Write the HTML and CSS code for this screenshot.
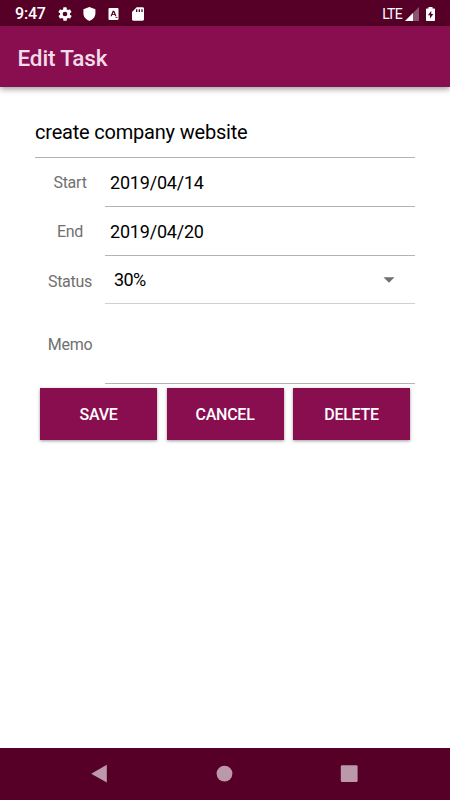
FILE: index.html
```
<!DOCTYPE html>
<html lang="en">
<head>
  <meta charset="UTF-8">
  <meta name="viewport" content="width=device-width, initial-scale=1.0">
  <title>Edit Task</title>
  <link rel="stylesheet" href="styles.css">
</head>
<body>
  <div class="status-bar">
    <span class="time">9:47</span>
    <div class="notifications">
      <svg width="16" height="16" viewBox="0 0 24 24"><path fill-rule="evenodd" d="M19.4 13a7.5 7.5 0 0 0 0-2l2.1-1.600a.5.5 0 0 0 .1-.6l-2-3.500a.5.5 0 0 0-.6-.2l-2.500 1a7.300 7.300 0 0 0-1.700-1l-.4-2.600A.5.5 0 0 0 14 2h-4a.5.5 0 0 0-.5.4l-.4 2.700a7.700 7.700 0 0 0-1.700 1l-2.500-1a.5.5 0 0 0-.6.2l-2 3.500a.5.5 0 0 0 .1.6L4.600 11a7.900 7.900 0 0 0 0 2l-2.100 1.600a.5.5 0 0 0-.1.6l2 3.500c.1.2.4.3.6.2l2.500-1a7.300 7.300 0 0 0 1.700 1l.4 2.700c0 .2.2.4.5.4h4c.2 0 .5-.2.5-.4l.4-2.700a7.700 7.700 0 0 0 1.700-1l2.500 1c.2.1.5 0 .6-.2l2-3.500a.5.5 0 0 0-.1-.6zM12 15.500a3.500 3.500 0 1 1 0-7 3.500 3.500 0 0 1 0 7z"/></svg>
      <svg width="16" height="16" viewBox="0 0 24 24"><path d="M12.600 1.500 3.600 5v6c0 5.500 3.800 9.500 9 11.500 5.200-2 9-6 9-11.500V5z"/></svg>
      <svg width="16" height="16" viewBox="0 0 16 16"><path fill-rule="evenodd" d="M3.500 2h8a1 1 0 0 1 1 1v10a1 1 0 0 1-1 1h-8a1 1 0 0 1-1-1V3a1 1 0 0 1 1-1zM6.700 4.700 4.500 10.300h1.300l.4-1.200h2.600l.4 1.200h1.300L8.300 4.700zM7.500 6l.8 2.200H6.700zM9.500 11h2v.8h-2z"/></svg>
      <svg width="16" height="16" viewBox="0 0 24 24"><path fill-rule="evenodd" d="M19 2H10L3 9v11c0 1.100.9 2 2 2h14c1.100 0 2-.9 2-2V4c0-1.100-.9-2-2-2zM9 5h2v4H9zm4 0h2v4h-2zm4 0h2v4h-2z"/></svg>
    </div>
    <span class="network">LTE</span>
    <svg class="signal" width="14" height="14" viewBox="0 0 14 14"><path class="dim" d="M0 14 14 0v14z"/><path d="M0 14 8 6v8z"/></svg>
    <svg width="9" height="14" viewBox="0 0 8 14" preserveAspectRatio="none"><path fill-rule="evenodd" d="M2.200 0h3.600v1.400H7.300a.7.7 0 0 1 .7.7v11.200a.7.7 0 0 1-.7.7H.7a.7.7 0 0 1-.7-.7V2.100a.7.7 0 0 1 .7-.7h1.500zM4.700 3.800 1.700 8.300h1.900v3.200l2.900-4.600H4.700z"/></svg>
  </div>
  <header class="app-bar">
    <h1>Edit Task</h1>
  </header>
  <main class="task-form">
    <div class="field title-field">create company website</div>
    <div class="row">
      <span class="label">Start</span>
      <div class="field">2019/04/14</div>
    </div>
    <div class="row">
      <span class="label">End</span>
      <div class="field">2019/04/20</div>
    </div>
    <div class="row status-row">
      <span class="label">Status</span>
      <div class="field select">
        <span>30%</span>
        <svg width="12" height="6" viewBox="0 0 12 6"><path d="M.5.2h11L6 5.800z"/></svg>
      </div>
    </div>
    <div class="row memo-row">
      <span class="label">Memo</span>
      <div class="field"></div>
    </div>
    <div class="buttons">
      <button type="button">SAVE</button>
      <button type="button">CANCEL</button>
      <button type="button">DELETE</button>
    </div>
  </main>
  <nav class="nav-bar">
    <svg width="18" height="20" viewBox="0 0 18 20"><path d="M1.200 9.700 16.800.8v17.800z"/></svg>
    <svg width="18" height="20" viewBox="0 0 18 20"><circle cx="9.500" cy="9.600" r="7.900"/></svg>
    <svg width="18" height="20" viewBox="0 0 18 20"><rect x=".8" y="1.200" width="16.800" height="16.800" rx="1.200"/></svg>
  </nav>
</body>
</html>
```
FILE: styles.css
```
* {
  margin: 0;
  padding: 0;
  box-sizing: border-box;
}
body {
  font-family: Roboto, sans-serif;
  background-color: #fff;
  height: 100vh;
  display: flex;
  flex-direction: column;
  overflow: hidden;
}
svg {
  display: block;
}
.status-bar {
  height: 26px;
  flex-shrink: 0;
  padding: 1px 15px 0 15px;
  background-color: #560027;
  color: #fff;
  fill: #fff;
  display: flex;
  align-items: center;
}
.time {
  width: 42px;
  font-size: 16px;
  font-weight: 500;
  letter-spacing: -0.2px;
}
.notifications {
  display: flex;
  gap: 8.4px;
}
.network {
  margin-left: auto;
  font-size: 14px;
  letter-spacing: -0.7px;
}
.signal {
  margin: 0 7px 0 3px;
}
.dim {
  fill: #8b5570;
}
.app-bar {
  height: 61px;
  flex-shrink: 0;
  padding: 2px 17.5px 0;
  background-color: #880e4f;
  box-shadow: 0 2px 6px rgba(0, 0, 0, 0.4);
  display: flex;
  align-items: center;
}
.app-bar h1 {
  color: #f3dce8;
  font-size: 22.5px;
  font-weight: 500;
  letter-spacing: -0.15px;
}
.task-form {
  flex: 1;
  padding: 20px 35px 0;
}
.field {
  flex: 1;
  padding: 0 5px;
  border-bottom: 1px solid #b9b0b5;
  color: #000;
  font-size: 18px;
  letter-spacing: -0.2px;
  display: flex;
  align-items: center;
}
.title-field {
  height: 51px;
  padding: 0;
  font-size: 20px;
}
.row {
  height: 49px;
  display: flex;
}
.label {
  width: 70px;
  color: #707070;
  font-size: 16px;
  letter-spacing: -0.25px;
  display: flex;
  align-items: center;
  justify-content: center;
}
.status-row {
  height: 48px;
}
.status-row .label {
  padding-top: 2px;
}
.select {
  padding: 0 20px 0 9px;
  border-color: #d4ced1;
  letter-spacing: -0.6px;
  justify-content: space-between;
}
.select svg {
  fill: #707070;
}
.memo-row {
  height: 80px;
}
.buttons {
  margin-top: 4px;
  padding: 0 5px;
  display: flex;
  gap: 9.5px;
}
.buttons button {
  flex: 1;
  height: 52px;
  border: none;
  background-color: #880e4f;
  color: #fff;
  font-family: inherit;
  font-size: 16px;
  font-weight: 500;
  letter-spacing: -0.25px;
  box-shadow: 0 1px 3px rgba(0, 0, 0, 0.4);
}
.nav-bar {
  height: 52px;
  flex-shrink: 0;
  padding: 0 92px 0 90px;
  background-color: #560027;
  fill: #bc99aa;
  display: flex;
  align-items: center;
  justify-content: space-between;
}
```
